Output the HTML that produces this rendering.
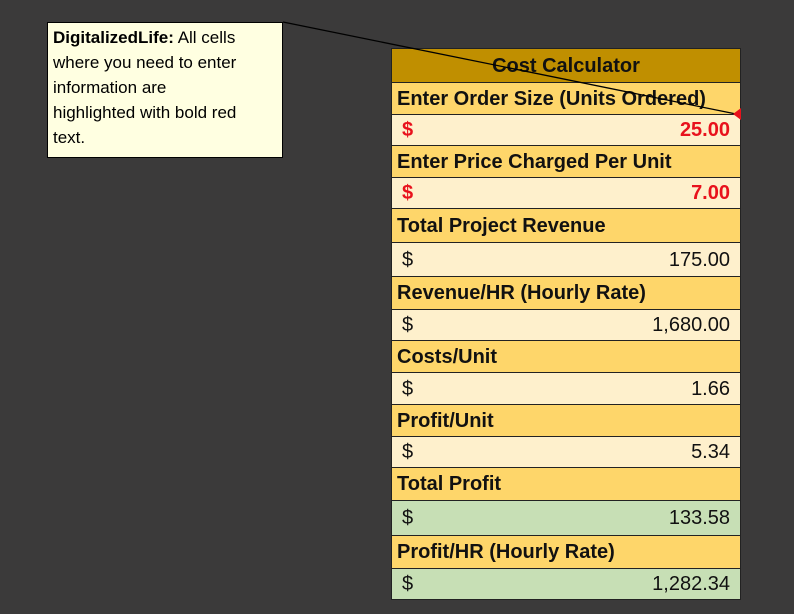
<!DOCTYPE html><html><head><style>
body{margin:0;width:794px;height:614px;background:#3b3a3a;position:relative;overflow:hidden;font-family:"Liberation Sans",sans-serif}
.r{position:absolute;left:391px;width:350px;border:1px solid #222;box-sizing:border-box;font-size:20px;line-height:1;display:flex;align-items:center;padding:0 5px}
.h{background:#c08f00;justify-content:center;font-weight:bold;color:#111}
.l{background:#fed66a;font-weight:bold;color:#111}
.v{background:#fef0cc;color:#111;justify-content:space-between;padding:0 10px 0 10px}
.red{color:#e8121c;font-weight:bold}
.g{background:#c7dfb5}
.note{position:absolute;left:47px;top:22px;width:236px;height:136px;box-sizing:border-box;background:#ffffe1;border:1px solid #000;padding:2px 5px;font-size:17px;line-height:25px;color:#000;white-space:nowrap}
</style></head><body>
<div class="r h" style="top:48px;height:35px">Cost Calculator</div>
<div class="r l" style="top:82px;height:33px">Enter Order Size (Units Ordered)</div>
<div class="r v red" style="top:114px;height:32px"><span>$</span><span>25.00</span></div>
<div class="r l" style="top:145px;height:33px">Enter Price Charged Per Unit</div>
<div class="r v red" style="top:177px;height:32px"><span>$</span><span>7.00</span></div>
<div class="r l" style="top:208px;height:35px">Total Project Revenue</div>
<div class="r v" style="top:242px;height:35px"><span>$</span><span>175.00</span></div>
<div class="r l" style="top:276px;height:34px">Revenue/HR (Hourly Rate)</div>
<div class="r v" style="top:309px;height:32px"><span>$</span><span>1,680.00</span></div>
<div class="r l" style="top:340px;height:33px">Costs/Unit</div>
<div class="r v" style="top:372px;height:33px"><span>$</span><span>1.66</span></div>
<div class="r l" style="top:404px;height:33px">Profit/Unit</div>
<div class="r v" style="top:436px;height:32px"><span>$</span><span>5.34</span></div>
<div class="r l" style="top:467px;height:34px">Total Profit</div>
<div class="r v g" style="top:500px;height:36px"><span>$</span><span>133.58</span></div>
<div class="r l" style="top:535px;height:34px">Profit/HR (Hourly Rate)</div>
<div class="r v g" style="top:568px;height:32px"><span>$</span><span>1,282.34</span></div>
<svg style="position:absolute;left:0;top:0" width="794" height="614"><line x1="283" y1="22" x2="741" y2="115" stroke="#000" stroke-width="1.3"/><polygon points="733,114 741,108 741,120" fill="#e8121c"/></svg>
<div class="note"><b>DigitalizedLife:</b> All cells<br>where you need to enter<br>information are<br>highlighted with bold red<br>text.</div>
</body></html>
